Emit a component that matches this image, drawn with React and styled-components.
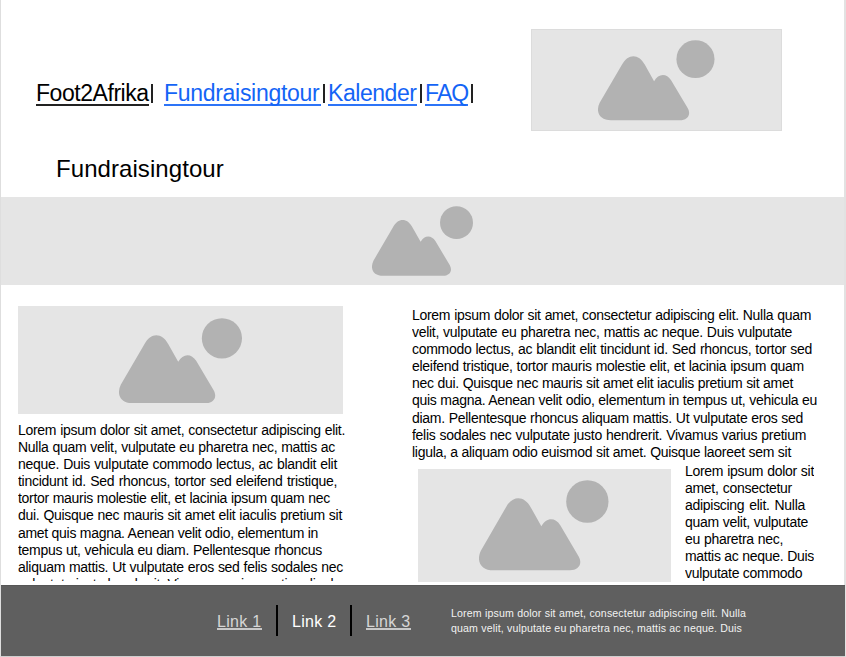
import React from "react";
import styled, { createGlobalStyle } from "styled-components";

const GlobalStyle = createGlobalStyle`
  *, *::before, *::after { box-sizing: border-box; }
  html, body { margin: 0; padding: 0; background: #fff; }
  body { font-family: "Liberation Sans", Arial, sans-serif; color: #000; overflow: hidden; }
`;

const Page = styled.div`
  width: 846px;
  height: 657px;
  display: flex;
  flex-direction: column;
  background: #fff;
  border-left: 1px solid #dedede;
  border-right: 2px solid #e2e2e2;
  border-bottom: 1px solid #cfcfcf;
`;

const Header = styled.header`
  height: 131px;
  flex: none;
  display: flex;
  align-items: flex-start;
  justify-content: space-between;
  padding: 29px 62px 0 35px;
`;

const Nav = styled.nav`
  display: flex;
  padding-top: 50px;
  font-size: 23px;
  line-height: 28px;
  white-space: nowrap;
`;

const NavLink = styled.a`
  width: ${(p) => p.$width}px;
  height: 27px;
  letter-spacing: ${(p) => p.$spacing || 0}px;
  color: ${(p) => (p.$home ? "#000" : "#1464f6")};
  border-bottom: 2px solid ${(p) => (p.$home ? "#222" : "#2d74f7")};
`;

const NavBar = styled.span`
  width: 2px;
  height: 19px;
  margin: 5px ${(p) => p.$after}px 0 ${(p) => p.$before}px;
  background: #222;
`;

const Placeholder = styled.div`
  width: ${(p) => p.$width};
  height: ${(p) => p.$height}px;
  flex: none;
  margin-top: ${(p) => p.$offset || 0}px;
  padding: ${(p) => p.$pad};
  background: #e5e5e5;
  border: ${(p) => (p.$outlined ? "1px solid #dcdcdc" : "0")};
`;

const Mountains = styled.svg`
  display: block;
  width: ${(p) => p.$width}px;
  height: ${(p) => p.$height}px;
  fill: #b2b2b2;
`;

const Title = styled.h1`
  height: 66px;
  flex: none;
  margin: 0;
  padding: 24px 0 0 55px;
  font-size: 24px;
  line-height: 28px;
  letter-spacing: 0.07px;
  font-weight: 400;
`;

const Content = styled.main`
  height: 300px;
  flex: none;
  display: flex;
  padding-left: 17px;
`;

const LeftColumn = styled.section`
  width: 394px;
  padding-top: 21px;
`;

const RightColumn = styled.section`
  width: 430px;
  padding-top: 21px;
`;

const Copy = styled.div`
  height: ${(p) => p.$height}px;
  padding-top: ${(p) => p.$top}px;
  overflow: hidden;
  font-size: 14px;
  line-height: 17.1px;
  letter-spacing: -0.29px;
`;

const Line = styled.div`
  width: ${(p) => p.$width}px;
  white-space: nowrap;
  text-align: justify;
  text-align-last: justify;
`;

const MediaRow = styled.div`
  display: flex;
  gap: 14px;
  padding-left: 6px;
`;

const Footer = styled.footer`
  flex: 1;
  display: flex;
  background: #5f5f5f;
  border-top: 1px solid #565656;
  padding: 19px 0 0 216px;
  color: #fff;
  margin-right: -1px;
`;

const FooterLinks = styled.div`
  display: flex;
  width: 234px;
  height: 31px;
  font-size: 16px;
  line-height: 33px;
  letter-spacing: 0.3px;
`;

const FooterLink = styled.a`
  width: 45px;
  height: 25px;
  white-space: nowrap;
  color: ${(p) => (p.$active ? "#fff" : "#d6d6d6")};
  border-bottom: ${(p) => (p.$active ? "0" : "2px solid #c8c8c8")};
`;

const FooterBar = styled.span`
  width: 2px;
  height: 31px;
  margin: 0 14px 0 ${(p) => p.$before}px;
  background: #000;
`;

const FooterCopy = styled.div`
  padding-top: 1px;
  font-size: 10.6px;
  line-height: 15px;
  letter-spacing: 0.14px;
  color: #f2f2f2;
`;

function Image({ width, height, pad, iconWidth, iconHeight, outlined, offset }) {
  return (
    <Placeholder $width={width} $height={height} $pad={pad} $outlined={outlined} $offset={offset}>
      <Mountains $width={iconWidth} $height={iconHeight} viewBox="233 59 349 242" preserveAspectRatio="none">
        <circle cx="525" cy="116.5" r="57" />
        <path d="M272 300.500C240 300.500 224 278 238 248L305 133C323 99 355 99 373 133L401 183C414 159 438 158 452 180L502 264C513 285 500 300.500 478 300.500Z" />
      </Mountains>
    </Placeholder>
  );
}

const leftLines = [
  ["Lorem ipsum dolor sit amet, consectetur adipiscing elit.", 327],
  ["Nulla quam velit, vulputate eu pharetra nec, mattis ac", 317],
  ["neque. Duis vulputate commodo lectus, ac blandit elit", 319],
  ["tincidunt id. Sed rhoncus, tortor sed eleifend tristique,", 319],
  ["tortor mauris molestie elit, et lacinia ipsum quam nec", 312],
  ["dui. Quisque nec mauris sit amet elit iaculis pretium sit", 324],
  ["amet quis magna. Aenean velit odio, elementum in", 300],
  ["tempus ut, vehicula eu diam. Pellentesque rhoncus", 304],
  ["aliquam mattis. Ut vulputate eros sed felis sodales nec", 325],
  ["vulputate justo hendrerit. Vivamus varius pretium ligula,", 324],
];

const rightLines = [
  ["Lorem ipsum dolor sit amet, consectetur adipiscing elit. Nulla quam", 399],
  ["velit, vulputate eu pharetra nec, mattis ac neque. Duis vulputate", 380],
  ["commodo lectus, ac blandit elit tincidunt id. Sed rhoncus, tortor sed", 400],
  ["eleifend tristique, tortor mauris molestie elit, et lacinia ipsum quam", 392],
  ["nec dui. Quisque nec mauris sit amet elit iaculis pretium sit amet", 381],
  ["quis magna. Aenean velit odio, elementum in tempus ut, vehicula eu", 405],
  ["diam. Pellentesque rhoncus aliquam mattis. Ut vulputate eros sed", 391],
  ["felis sodales nec vulputate justo hendrerit. Vivamus varius pretium", 394],
  ["ligula, a aliquam odio euismod sit amet. Quisque laoreet sem sit", 379],
];

const narrowLines = [
  ["Lorem ipsum dolor sit", 129],
  ["amet, consectetur", 107],
  ["adipiscing elit. Nulla", 120],
  ["quam velit, vulputate", 123],
  ["eu pharetra nec,", 98],
  ["mattis ac neque. Duis", 129],
  ["vulputate commodo", 117],
];

const footerLines = [
  ["Lorem ipsum dolor sit amet, consectetur adipiscing elit. Nulla", 295],
  ["quam velit, vulputate eu pharetra nec, mattis ac neque. Duis", 291],
];

const renderLines = (lines) =>
  lines.map(([text, width]) => (
    <Line key={text} $width={width}>{text}</Line>
  ));

export default function App() {
  return (
    <>
      <GlobalStyle />
      <Page>
        <Header>
          <Nav>
            <NavLink $home $width={113} $spacing={-0.45}>Foot2Afrika</NavLink>
            <NavBar $before={2} $after={11} />
            <NavLink $width={157} $spacing={-0.3}>Fundraisingtour</NavLink>
            <NavBar $before={2} $after={3} />
            <NavLink $width={89} $spacing={-0.45}>Kalender</NavLink>
            <NavBar $before={2.5} $after={3.5} />
            <NavLink $width={43} $spacing={-0.9}>FAQ</NavLink>
            <NavBar $before={2.5} $after={0} />
          </Nav>
          <Image width="251px" height={102} pad="10px 0 0 66px" iconWidth={116.500} iconHeight={80.500} outlined />
        </Header>
        <Title>Fundraisingtour</Title>
        <Image width="100%" height={88} pad="8.5px 0 0 371px" iconWidth={101} iconHeight={70} />
        <Content>
          <LeftColumn>
            <Image width="325px" height={108} pad="11.5px 0 0 101px" iconWidth={123} iconHeight={85.500} />
            <Copy $height={167} $top={8}>{renderLines(leftLines)}</Copy>
          </LeftColumn>
          <RightColumn>
            <Copy $height={156} $top={1}>{renderLines(rightLines)}</Copy>
            <MediaRow>
              <Image width="253px" height={113} offset={7} pad="11px 0 0 61px" iconWidth={129.500} iconHeight={90.500} />
              <Copy $height={122} $top={0.5}>{renderLines(narrowLines)}</Copy>
            </MediaRow>
          </RightColumn>
        </Content>
        <Footer>
          <FooterLinks>
            <FooterLink>Link 1</FooterLink>
            <FooterBar $before={14} />
            <FooterLink $active>Link 2</FooterLink>
            <FooterBar $before={13} />
            <FooterLink>Link 3</FooterLink>
          </FooterLinks>
          <FooterCopy>{renderLines(footerLines)}</FooterCopy>
        </Footer>
      </Page>
    </>
  );
}
